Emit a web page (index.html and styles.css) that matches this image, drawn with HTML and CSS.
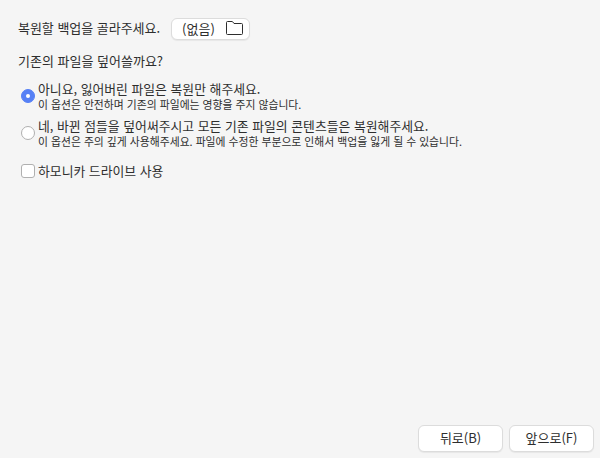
FILE: index.html
```html
<!DOCTYPE html>
<html lang="ko">
<head>
  <meta charset="UTF-8">
  <meta name="viewport" content="width=device-width, initial-scale=1.0">
  <title>복원</title>
  <link rel="stylesheet" href="styles.css">
</head>
<body>
  <div class="page">
    <div class="content">
      <div class="picker-row">
        <span class="picker-text">복원할 백업을 골라주세요.</span>
        <button class="btn picker">
          <span class="picker-label">(없음)</span>
          <svg class="folder" width="17" height="14" viewBox="0 0 17 14" fill="none" stroke="#2e2e2e" stroke-width="1">
            <path d="M.5 1.5a1 1 0 0 1 1-1h4.5a1 1 0 0 1 .8.4L8 2.5h7.5a1 1 0 0 1 1 1v9a1 1 0 0 1-1 1h-14a1 1 0 0 1-1-1z"/>
          </svg>
        </button>
      </div>

      <div class="question">기존의 파일을 덮어쓸까요?</div>

      <div class="options">
        <label class="option">
          <span class="radio checked"></span>
          <span class="option-text">
            <span class="option-title">아니요, 잃어버린 파일은 복원만 해주세요.</span>
            <span class="option-desc">이 옵션은 안전하며 기존의 파일에는 영향을 주지 않습니다.</span>
          </span>
        </label>
        <label class="option">
          <span class="radio"></span>
          <span class="option-text">
            <span class="option-title">네, 바뀐 점들을 덮어써주시고 모든 기존 파일의 콘텐츠들은 복원해주세요.</span>
            <span class="option-desc">이 옵션은 주의 깊게 사용해주세요. 파일에 수정한 부분으로 인해서 백업을 잃게 될 수 있습니다.</span>
          </span>
        </label>
      </div>

      <label class="check-row">
        <span class="checkbox"></span>
        <span>하모니카 드라이브 사용</span>
      </label>
    </div>

    <div class="footer">
      <button class="btn nav back">뒤로(B)</button>
      <button class="btn nav next">앞으로(F)</button>
    </div>
  </div>
</body>
</html>
```
FILE: styles.css
```css
html, body {
  height: 100%;
}

body {
  margin: 0;
  background-color: #f5f5f5;
  color: #2e2e2e;
  font-family: "Noto Sans CJK KR", "Noto Sans", sans-serif;
  font-size: 13px;
  line-height: 17px;
}

.page {
  display: flex;
  flex-direction: column;
  justify-content: space-between;
  height: 458px;
  box-sizing: border-box;
  padding: 18px 6px 6px 18px;
}

.picker-row {
  display: flex;
  align-items: flex-start;
  gap: 11px;
  height: 22px;
}

.picker-text {
  line-height: 20px;
  letter-spacing: -0.03px;
}

.btn {
  background-color: #ffffff;
  border: 1px solid #dcdcdc;
  border-radius: 6px;
  box-shadow: 0 1px 1px rgba(0, 0, 0, 0.06);
  color: #2e2e2e;
  font-family: inherit;
  font-size: 13px;
  padding: 0 0 2px;
}

.picker {
  display: flex;
  align-items: center;
  justify-content: space-between;
  width: 79px;
  height: 22px;
  padding: 0 6px 2px 10px;
  box-sizing: border-box;
}

.folder {
  display: block;
}

.question {
  margin-top: 12px;
  height: 18px;
}

.options {
  display: flex;
  flex-direction: column;
  gap: 6px;
  margin-top: 11px;
  padding-left: 3px;
}

.option {
  display: flex;
  align-items: flex-start;
  gap: 3px;
}

.option-text {
  display: flex;
  flex-direction: column;
}

.option-title {
  font-size: 12.85px;
  line-height: 16px;
}

.option-desc {
  font-size: 10.83px;
  line-height: 15px;
}

.radio {
  display: flex;
  align-items: center;
  justify-content: center;
  flex-shrink: 0;
  box-sizing: border-box;
  width: 14px;
  height: 14px;
  margin-top: 8px;
  border: 1px solid #b0b0b0;
  border-radius: 50%;
  background-color: #ffffff;
}

.radio.checked {
  background-color: #5680f5;
  border-color: #5680f5;
}

.radio.checked::after {
  content: "";
  width: 4px;
  height: 4px;
  border-radius: 50%;
  background-color: #ffffff;
}

.check-row {
  display: flex;
  align-items: center;
  gap: 3px;
  margin-top: 14px;
  padding-left: 3px;
  font-size: 12.85px;
  line-height: 16px;
}

.checkbox {
  flex-shrink: 0;
  box-sizing: border-box;
  width: 14px;
  height: 14px;
  border: 1px solid #b0b0b0;
  border-radius: 3px;
  background-color: #ffffff;
}

.footer {
  display: flex;
  justify-content: flex-end;
  gap: 6px;
}

.nav {
  width: 85px;
  height: 27px;
}
```
